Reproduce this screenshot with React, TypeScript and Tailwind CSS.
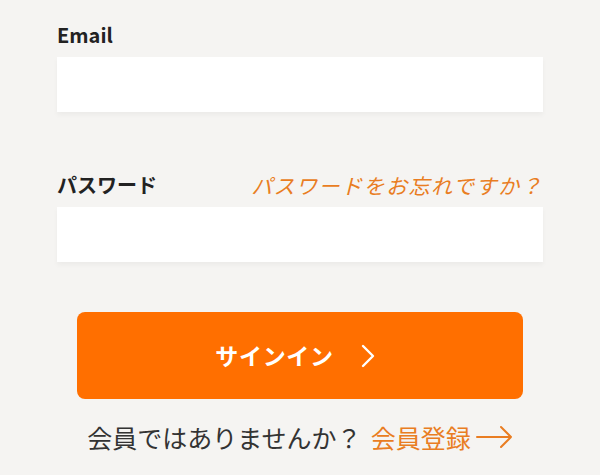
export default function App() {
  return (
    <div
      className="min-h-screen w-full bg-[#f5f4f2] px-[57px] pt-[21px]"
      style={{ fontFamily: '"Noto Sans CJK JP", "Noto Sans", sans-serif' }}
    >
      <label className="block text-[20px] leading-[28px] font-bold text-[#222]">Email</label>
      <input
        type="email"
        className="mt-[8px] block h-[55px] w-full bg-white px-4 outline-none shadow-[0_3px_5px_rgba(0,0,0,0.04)]"
      />

      <div className="mt-[59px] flex items-center justify-between leading-[28px]">
        <label className="text-[20px] font-bold text-[#222]">パスワード</label>
        <a className="text-[21px] italic tracking-[1.5px] text-[#e97d22]">パスワードをお忘れですか？</a>
      </div>
      <input
        type="password"
        className="mt-[8px] block h-[55px] w-full bg-white px-4 outline-none shadow-[0_3px_5px_rgba(0,0,0,0.04)]"
      />

      <div className="px-[20px]">
        <button className="mt-[50px] flex h-[87px] w-full items-center justify-center gap-[27px] rounded-[8px] bg-[#ff6f00] pr-[10px] text-white">
          <span className="text-[23px] font-bold tracking-[0.03em]">サインイン</span>
          <svg width="14" height="24" viewBox="0 0 14 24" fill="none">
            <path d="M2 2l10 10L2 22" stroke="white" strokeWidth="2.4" strokeLinecap="round" strokeLinejoin="round" />
          </svg>
        </button>
      </div>

      <div className="mt-[22px] flex items-center justify-center text-[25px] leading-[32px] text-[#333]">
        <span>会員ではありませんか？</span>
        <a className="ml-[9px] flex items-center text-[#e97d22]">
          会員登録
          <svg className="ml-[5px]" width="37" height="24" viewBox="0 0 37 24" fill="none">
            <path d="M1 12h34M25 2l10 10-10 10" stroke="#e97d22" strokeWidth="2" strokeLinecap="round" strokeLinejoin="round" />
          </svg>
        </a>
      </div>
    </div>
  );
}
